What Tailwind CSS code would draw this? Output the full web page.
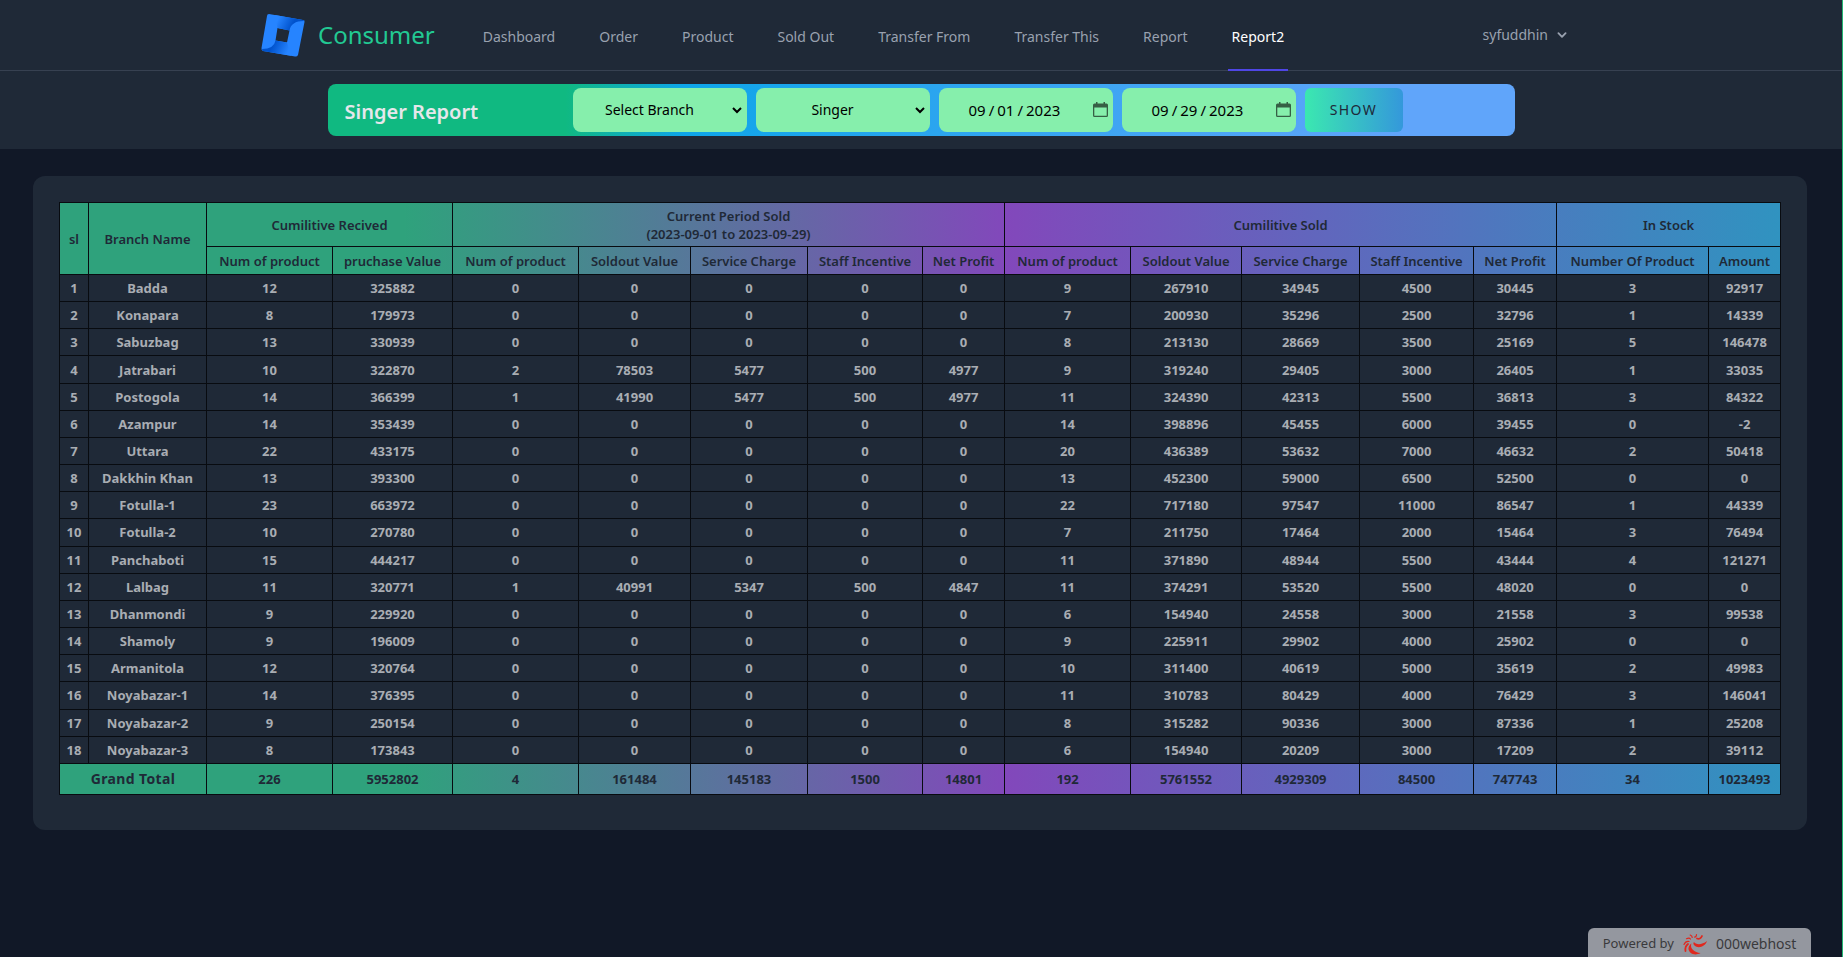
<!DOCTYPE html>
<html lang="en">
<head>
<meta charset="utf-8">
<meta name="viewport" content="width=device-width, initial-scale=1">
<title>Consumer - Report2</title>
<script src="https://cdn.jsdelivr.net/npm/@tailwindcss/browser@4"></script>
</head>
<body class="min-h-screen border-r border-[#22b573] bg-[#111827] font-['Noto_Sans','Open_Sans',sans-serif]">
<header class="bg-[#1f2937]">
  <nav class="border-b border-[#374151]" aria-label="Main">
    <div class="mx-auto flex h-[70px] max-w-[1320px] items-center">
      <a href="#" class="flex items-center gap-3 text-2xl text-[#22c993]">
        <svg class="h-[45px] w-[45px]" viewBox="0 0 45 45" aria-hidden="true">
          <defs>
            <linearGradient id="fold" gradientUnits="userSpaceOnUse" x1="17" y1="6" x2="31" y2="13"><stop offset="0" stop-color="#2684ff"/><stop offset="1" stop-color="#0052cc"/></linearGradient>
            <linearGradient id="fold2" gradientUnits="userSpaceOnUse" x1="27" y1="38" x2="12" y2="31"><stop offset="0" stop-color="#2684ff"/><stop offset="1" stop-color="#0052cc"/></linearGradient>
          </defs>
          <path fill="#2684ff" fill-rule="evenodd" d="M8 1 L42 7 Q44 7 43.500 9 L37 42 Q36 44 34 43.500 L2 38 Q0 37 0.500 35 L6 3 Q6 1 8 1 Z M16.500 15 L14.500 27.500 L26 29.500 L28.500 17.500 Z"/>
          <path fill="url(#fold)" d="M14 2.100 L42 7 Q43 7 43 8 Q30 8 28.500 17.500 L16.500 15 Z"/>
          <path fill="url(#fold2)" d="M30 42.700 L2 38 Q1 37 1 36 Q13 36 14.500 27.500 L26 29.500 Z"/>
        </svg>
        <span>Consumer</span>
      </a>
      <div class="ml-[44px] flex h-[71px] items-stretch gap-9 self-start text-sm text-gray-400">
        <a href="#" class="flex items-center border-b-2 border-transparent px-1 pt-1">Dashboard</a>
        <a href="#" class="flex items-center border-b-2 border-transparent px-1 pt-1">Order</a>
        <a href="#" class="flex items-center border-b-2 border-transparent px-1 pt-1">Product</a>
        <a href="#" class="flex items-center border-b-2 border-transparent px-1 pt-1">Sold Out</a>
        <a href="#" class="flex items-center border-b-2 border-transparent px-1 pt-1">Transfer From</a>
        <a href="#" class="flex items-center border-b-2 border-transparent px-1 pt-1">Transfer This</a>
        <a href="#" class="flex items-center border-b-2 border-transparent px-1 pt-1">Report</a>
        <a href="#" aria-current="page" class="flex items-center border-b-2 border-[#4f46e5] px-1 pt-1 text-white">Report2</a>
      </div>
      <button type="button" class="mr-[10px] ml-auto flex items-center gap-[5px] text-sm text-gray-400">
        <span>syfuddhin</span>
        <svg class="size-[18px]" viewBox="0 0 20 20" fill="currentColor" aria-hidden="true"><path fill-rule="evenodd" d="M5.293 7.293a1 1 0 011.414 0L10 10.586l3.293-3.293a1 1 0 111.414 1.414l-4 4a1 1 0 01-1.414 0l-4-4a1 1 0 010-1.414z"/></svg>
      </button>
    </div>
  </nav>
  <div class="pt-[13px] pb-[13px]">
    <form class="mx-auto flex max-w-[1187px] items-center gap-[9px] rounded-lg bg-linear-to-r/srgb from-[#10b981] from-20% via-[#0ea5e9] via-30% to-[#60a5fa] to-90% py-1 pl-[17px] text-black">
      <h1 class="w-[219px] pt-1 text-xl leading-8 font-semibold text-gray-200">Singer Report</h1>
      <div class="relative w-[174px]">
        <select aria-label="Branch" class="h-11 w-full appearance-none rounded-lg bg-[#86efac] pr-5 text-center text-sm"><option>Select Branch</option></select>
        <svg class="pointer-events-none absolute top-[18px] right-[5px] h-[8px] w-[10px]" viewBox="0 0 10 8" fill="none" stroke="#000" stroke-width="2" aria-hidden="true"><path d="M1 2l4 4 4-4"/></svg>
      </div>
      <div class="relative w-[174px]">
        <select aria-label="Brand" class="h-11 w-full appearance-none rounded-lg bg-[#86efac] pr-5 text-center text-sm"><option>Singer</option></select>
        <svg class="pointer-events-none absolute top-[18px] right-[5px] h-[8px] w-[10px]" viewBox="0 0 10 8" fill="none" stroke="#000" stroke-width="2" aria-hidden="true"><path d="M1 2l4 4 4-4"/></svg>
      </div>
      <div class="relative w-[174px]">
        <input type="date" aria-label="From" value="2023-09-01" class="h-11 w-full rounded-lg bg-[#86efac] pr-[5px] pl-[29px] text-[15px] [&::-webkit-calendar-picker-indicator]:opacity-0 [&::-webkit-datetime-edit-text]:px-[2px]">
        <svg class="pointer-events-none absolute top-[14px] right-[5px] h-[15px] w-[15px]" viewBox="0 0 15 15" fill="#365f45" aria-hidden="true"><path fill-rule="evenodd" d="M3 0h1.500v1.500h6V0H12v1.500h1.500A1.500 1.500 0 0115 3v10.500a1.500 1.500 0 01-1.500 1.500h-12A1.500 1.500 0 010 13.500V3a1.500 1.500 0 011.500-1.500H3zM1.300 5.500v8.200h12.400V5.500z"/></svg>
      </div>
      <div class="relative w-[174px]">
        <input type="date" aria-label="To" value="2023-09-29" class="h-11 w-full rounded-lg bg-[#86efac] pr-[5px] pl-[29px] text-[15px] [&::-webkit-calendar-picker-indicator]:opacity-0 [&::-webkit-datetime-edit-text]:px-[2px]">
        <svg class="pointer-events-none absolute top-[14px] right-[5px] h-[15px] w-[15px]" viewBox="0 0 15 15" fill="#365f45" aria-hidden="true"><path fill-rule="evenodd" d="M3 0h1.500v1.500h6V0H12v1.500h1.500A1.500 1.500 0 0115 3v10.500a1.500 1.500 0 01-1.500 1.500h-12A1.500 1.500 0 010 13.500V3a1.500 1.500 0 011.500-1.500H3zM1.300 5.500v8.200h12.400V5.500z"/></svg>
      </div>
      <button type="submit" class="h-11 w-[98px] rounded-md bg-linear-to-r/srgb from-[#3be8b0] to-[#3498db] text-sm tracking-widest text-gray-800">SHOW</button>
    </form>
  </div>
</header>

<main class="mt-[27px] mr-[35px] ml-[33px] rounded-xl bg-[#1f2937] px-[26px] pt-[26px] pb-[35px]">
  <table class="h-[593px] w-full table-fixed border-collapse text-center text-[13px] leading-[18px] font-bold [&_td]:border [&_td]:border-[#080b10] [&_td]:p-0 [&_th]:border [&_th]:border-[#080b10] [&_th]:p-0">
    <colgroup>
      <col class="w-[29px]"><col class="w-[118px]"><col class="w-[126px]"><col class="w-[120px]"><col class="w-[126px]"><col class="w-[112px]"><col class="w-[117px]"><col class="w-[115px]"><col class="w-[82px]"><col class="w-[126px]"><col class="w-[111px]"><col class="w-[118px]"><col class="w-[114px]"><col class="w-[83px]"><col class="w-[152px]"><col class="w-[72px]">
    </colgroup>
    <thead class="text-[#1f2937] [&_th]:font-semibold">
      <tr class="h-11 bg-linear-to-r/srgb from-[#2fa27c] from-20% via-[#8248bb] via-55% to-[#3093c0]">
        <th rowspan="2">sl</th><th rowspan="2">Branch Name</th><th colspan="2">Cumilitive Recived</th><th colspan="5">Current Period Sold<br>(2023-09-01 to 2023-09-29)</th><th colspan="5">Cumilitive Sold</th><th colspan="2">In Stock</th>
      </tr>
      <tr class="h-7 bg-linear-to-r/srgb from-[#2fa27c] from-20% via-[#8248bb] via-55% to-[#3093c0]">
        <th>Num of product</th><th>pruchase Value</th><th>Num of product</th><th>Soldout Value</th><th>Service Charge</th><th>Staff Incentive</th><th>Net Profit</th><th>Num of product</th><th>Soldout Value</th><th>Service Charge</th><th>Staff Incentive</th><th>Net Profit</th><th>Number Of Product</th><th>Amount</th>
      </tr>
    </thead>
    <tbody id="rows" class="text-[#a9adb3]"></tbody>
    <tfoot class="text-[#1f2937]">
      <tr class="h-[31px] bg-linear-to-r/srgb from-[#2fa27c] from-20% via-[#8248bb] via-55% to-[#3093c0]">
        <th colspan="2" class="text-sm tracking-wide">Grand Total</th><td>226</td><td>5952802</td><td>4</td><td>161484</td><td>145183</td><td>1500</td><td>14801</td><td>192</td><td>5761552</td><td>4929309</td><td>84500</td><td>747743</td><td>34</td><td>1023493</td>
      </tr>
    </tfoot>
  </table>
</main>

<a href="#" class="fixed right-[32px] bottom-0 flex h-[29px] w-[223px] items-center justify-center gap-2 rounded-t-md bg-[#94979f] pt-[3px] text-[13px] text-[#3a3a3c]">
  <span>Powered by</span>
  <svg class="h-[22px] w-[26px]" viewBox="0 0 26 22" fill="none" stroke="#e0281e" stroke-linecap="round" aria-hidden="true">
    <path fill="#e0281e" stroke="none" d="M12 9c2 3 8 3 13-1-2 6-9 8-12.500 4.500-1.500-1.500-1.300-2.500-.5-3.500z"/>
    <path fill="#e0281e" stroke="none" d="M9.500 10.500c-1.800 4 1.500 8.500 9 9.500-6 3.500-12.500 0-12-5 .3-2 1.500-3.500 3-4.500z"/>
    <path stroke-width="1.800" d="M15 5.500c2 .8 4 0 5-2.500M6 11c-2 1.500-3 4-2.500 7"/>
    <path stroke-width="1.200" d="M12.500 4c1 .3 2-.8 2-2.500M7 8.500c-2-.3-4 .8-5 3M8.500 6c-.8-1-2.500-1-4-.3M10.200 4.500c0-1-.8-2-2-2.500"/>
  </svg>
  <span class="text-sm">000webhost</span>
</a>

<script>
const data = `Badda,12,325882,0,0,0,0,0,9,267910,34945,4500,30445,3,92917
Konapara,8,179973,0,0,0,0,0,7,200930,35296,2500,32796,1,14339
Sabuzbag,13,330939,0,0,0,0,0,8,213130,28669,3500,25169,5,146478
Jatrabari,10,322870,2,78503,5477,500,4977,9,319240,29405,3000,26405,1,33035
Postogola,14,366399,1,41990,5477,500,4977,11,324390,42313,5500,36813,3,84322
Azampur,14,353439,0,0,0,0,0,14,398896,45455,6000,39455,0,-2
Uttara,22,433175,0,0,0,0,0,20,436389,53632,7000,46632,2,50418
Dakkhin Khan,13,393300,0,0,0,0,0,13,452300,59000,6500,52500,0,0
Fotulla-1,23,663972,0,0,0,0,0,22,717180,97547,11000,86547,1,44339
Fotulla-2,10,270780,0,0,0,0,0,7,211750,17464,2000,15464,3,76494
Panchaboti,15,444217,0,0,0,0,0,11,371890,48944,5500,43444,4,121271
Lalbag,11,320771,1,40991,5347,500,4847,11,374291,53520,5500,48020,0,0
Dhanmondi,9,229920,0,0,0,0,0,6,154940,24558,3000,21558,3,99538
Shamoly,9,196009,0,0,0,0,0,9,225911,29902,4000,25902,0,0
Armanitola,12,320764,0,0,0,0,0,10,311400,40619,5000,35619,2,49983
Noyabazar-1,14,376395,0,0,0,0,0,11,310783,80429,4000,76429,3,146041
Noyabazar-2,9,250154,0,0,0,0,0,8,315282,90336,3000,87336,1,25208
Noyabazar-3,8,173843,0,0,0,0,0,6,154940,20209,3000,17209,2,39112`;
document.getElementById('rows').innerHTML = data.split('\n').map((line, i) =>
  '<tr class="h-[27px]">' + [i + 1, ...line.split(',')].map(v => '<td>' + v + '</td>').join('') + '</tr>').join('');
</script>
</body>
</html>
